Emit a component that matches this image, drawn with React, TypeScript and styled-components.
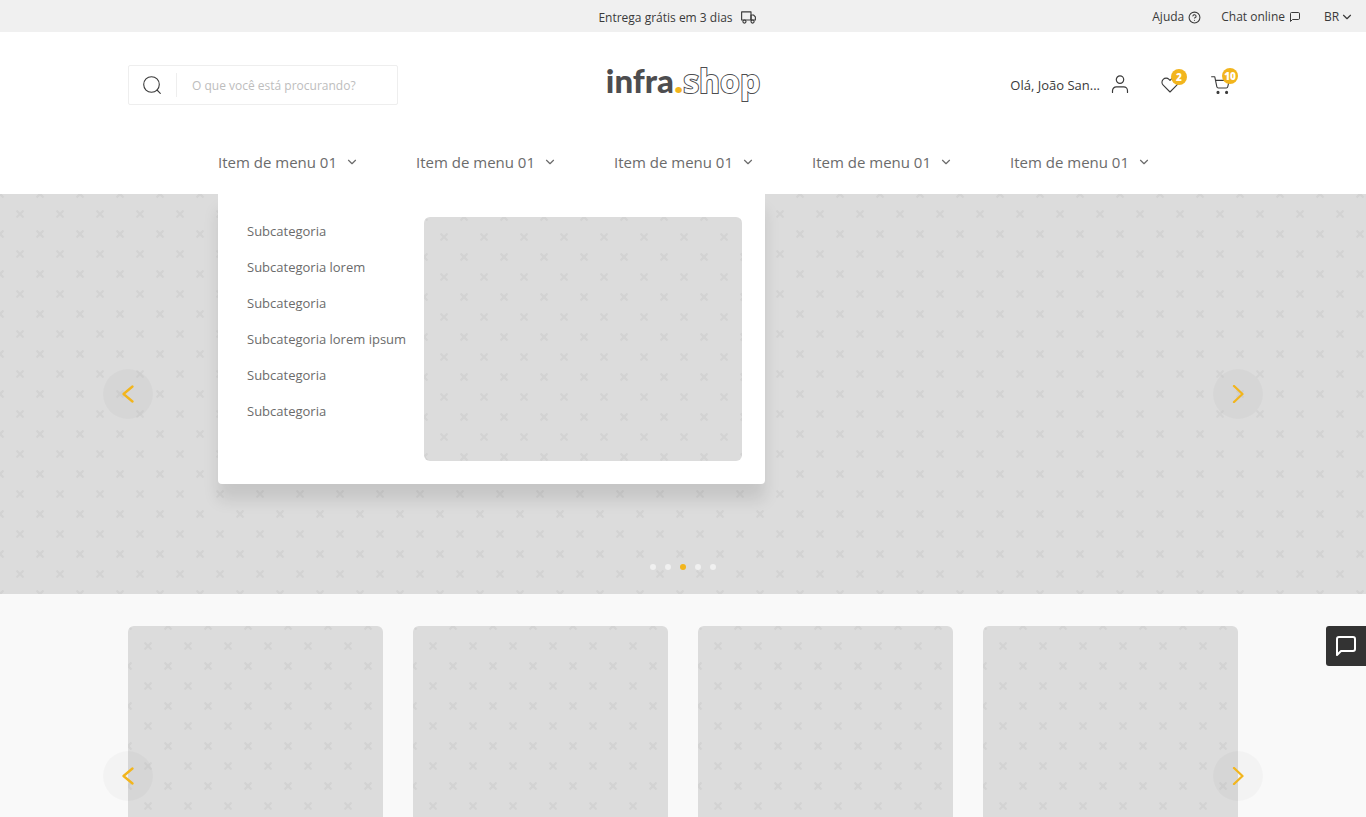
import React from "react";
import styled, { createGlobalStyle } from "styled-components";
import {
  FiTruck,
  FiHelpCircle,
  FiMessageSquare,
  FiChevronDown,
} from "react-icons/fi";

const color = {
  ink: "#3a3a3a",
  text: "#6b6b6b",
  logo: "#4d4d4f",
  muted: "#bdbdbd",
  line: "#eeeeee",
  bar: "#f0f0f0",
  page: "#f9f9f9",
  placeholder: "#dcdcdc",
  accent: "#f2b51d",
  chat: "#333333",
};

const crossTile = `url("data:image/svg+xml,${encodeURIComponent(
  '<svg xmlns="http://www.w3.org/2000/svg" width="40" height="40"><g stroke="#d3d3d3" stroke-width="2.4"><path d="M16.5 16.5l7 7m0-7l-7 7M-3.5 -3.5l7 7M3.5 -3.5l-7 7M36.5 -3.5l7 7m0-7l-7 7M-3.5 36.5l7 7m0-7l-7 7M36.5 36.5l7 7m0-7l-7 7"/></g></svg>'
)}")`;

const GlobalStyle = createGlobalStyle`
  *, *::before, *::after { box-sizing: border-box; }
  body {
    margin: 0;
    background: ${color.page};
    color: ${color.ink};
    font-family: "Open Sans", "Noto Sans", sans-serif;
    font-size: 12px;
    line-height: 16px;
  }
  button, input, select {
    font: inherit;
    color: inherit;
    background: none;
    border: 0;
    padding: 0;
    margin: 0;
  }
  button { cursor: pointer; }
  a { color: inherit; text-decoration: none; }
  ul { list-style: none; margin: 0; padding: 0; }
  svg { display: block; flex: none; }
`;

const TopBar = styled.div`
  display: grid;
  grid-template-columns: 1fr auto 1fr;
  align-items: center;
  height: 32px;
  padding: 2px 12px 0;
  background: ${color.bar};
`;

const Shipping = styled.p`
  grid-column: 2;
  display: flex;
  align-items: center;
  gap: 8px;
  margin: 0;
  padding: 1px 12px 0 0;
`;

const TopLinks = styled.nav`
  display: flex;
  justify-content: flex-end;
  align-items: center;
  gap: 20px;
`;

const TopLink = styled.a`
  display: flex;
  align-items: center;
  gap: 4px;
`;

const Language = styled.label`
  display: flex;
  align-items: center;
  padding-left: 3px;

  select {
    appearance: none;
    cursor: pointer;
  }
`;

const Container = styled.div`
  position: relative;
  width: calc(100% - 48px);
  max-width: 1110px;
  margin: 0 auto;
`;

const Header = styled.header`
  background: #ffffff;
`;

const HeaderRow = styled(Container)`
  display: grid;
  grid-template-columns: 1fr auto 1fr;
  align-items: center;
  padding-top: 33px;
`;

const Search = styled.form`
  display: flex;
  align-items: center;
  width: 270px;
  height: 40px;
  border: 1px solid ${color.line};
  border-radius: 2px;

  button {
    display: grid;
    place-items: center;
    width: 48px;
    height: 24px;
    padding-right: 2px;
    border-right: 1px solid ${color.line};
  }

  input {
    flex: 1;
    min-width: 0;
    padding: 2px 15px 0;
    outline: 0;
  }

  input::placeholder {
    color: ${color.muted};
    opacity: 1;
  }
`;

const Logo = styled.a`
  display: flex;
  align-items: baseline;
  height: 40px;
  font-size: 32px;
  line-height: 30px;
  color: ${color.logo};
`;

const LogoName = styled.span`
  font-family: Lato, sans-serif;
  font-size: 33px;
  font-weight: 900;
`;

const LogoDot = styled.span`
  font-weight: 800;
  color: ${color.accent};
`;

const LogoOutline = styled.span`
  color: #ffffff;
  font-weight: 700;
  -webkit-text-stroke: 2px ${color.logo};
  paint-order: stroke fill;
`;

const Account = styled.div`
  display: flex;
  justify-content: flex-end;
  align-items: center;
`;

const AccountLink = styled.a`
  display: flex;
  align-items: center;
  gap: 11px;
  margin-right: 32px;
  font-size: 13px;
`;

const IconLink = styled.a`
  position: relative;
  display: block;
  padding-right: 8px;

  & + & {
    margin-left: 24px;
  }
`;

const Badge = styled.span`
  position: absolute;
  top: -8px;
  right: 0;
  width: 16px;
  height: 16px;
  border-radius: 50%;
  background: ${color.accent};
  color: #ffffff;
  font-size: 10px;
  font-weight: 800;
  line-height: 16px;
  text-align: center;
`;

const MenuBar = styled.nav`
  width: 930px;
  max-width: 100%;
  margin: 0 auto;
  position: relative;
  z-index: 2;
  padding: 45px 0 20px;
`;

const MenuList = styled.ul`
  display: flex;
  justify-content: space-between;
`;

const MenuButton = styled.button`
  display: flex;
  align-items: center;
  gap: 8px;
  font-size: 15px;
  line-height: 24px;
  color: ${color.text};

  svg {
    margin-right: -3px;
    stroke-width: 2;
  }
`;

const Dropdown = styled.div`
  position: absolute;
  top: 100%;
  left: 0;
  display: flex;
  justify-content: space-between;
  width: 547px;
  padding: 23px;
  border-radius: 0 0 4px 4px;
  background: #ffffff;
  box-shadow: 0 16px 16px rgba(0, 0, 0, 0.1);
`;

const SubList = styled.ul`
  padding-left: 6px;
  color: ${color.text};
  font-size: 13px;
  line-height: 28px;

  li + li {
    margin-top: 8px;
  }
`;

const Placeholder = styled.div`
  background: ${color.placeholder} ${crossTile};
`;

const Promo = styled(Placeholder)`
  width: 318px;
  height: 244px;
  border-radius: 6px;
`;

const Hero = styled(Placeholder)`
  position: relative;
  height: 400px;
`;

const HeroInner = styled(Container)`
  height: 100%;
`;

const Arrow = styled.button<{ $side: "left" | "right" }>`
  position: absolute;
  top: 50%;
  ${(p) => p.$side}: 0;
  display: grid;
  place-items: center;
  width: 50px;
  height: 50px;
  border-radius: 50%;
  background: rgba(0, 0, 0, 0.025);
  transform: translate(${(p) => (p.$side === "left" ? "-50%" : "50%")}, -50%);
`;

const Dots = styled.div`
  position: absolute;
  right: 0;
  bottom: 24px;
  left: 0;
  display: flex;
  justify-content: center;
  align-items: center;
  gap: 9px;
`;

const Dot = styled.button<{ $active: boolean }>`
  width: 6px;
  height: 6px;
  border-radius: 50%;
  background: ${(p) => (p.$active ? color.accent : "#f0f0f0")};
`;

const Shelf = styled(Container)`
  margin-top: 32px;
`;

const CardGrid = styled.ul`
  display: grid;
  grid-template-columns: repeat(4, 1fr);
  gap: 30px;
`;

const Card = styled(Placeholder)`
  height: 300px;
  border-radius: 6px;
`;

const ChatButton = styled.button`
  position: fixed;
  top: 626px;
  right: 0;
  display: grid;
  place-items: center;
  width: 40px;
  height: 40px;
  border-radius: 3px 0 0 3px;
  background: ${color.chat};
  color: #ffffff;
`;

const stroke = {
  fill: "none",
  stroke: "currentColor",
  strokeLinecap: "round" as const,
  strokeLinejoin: "round" as const,
};

const SearchIcon = () => (
  <svg width="18" height="18" viewBox="0 0 18 18" {...stroke} strokeWidth="1.1">
    <circle cx="8.5" cy="8.5" r="7.8" />
    <path d="M14 14l3.3 3.3" />
  </svg>
);

const UserIcon = () => (
  <svg width="18" height="20" viewBox="0 0 18 20" {...stroke} strokeWidth="1.2">
    <circle cx="9" cy="4.6" r="3.7" />
    <path d="M1.5 17.5v-1.8a3.8 3.8 0 0 1 3.8-3.8h7.4a3.8 3.8 0 0 1 3.8 3.8v1.8" />
  </svg>
);

const HeartIcon = () => (
  <svg width="18" height="17" viewBox="0 0 18 17" {...stroke} strokeWidth="1.1">
    <path d="M9 15L2.2 8.2a4.1 4.1 0 0 1 0-5.9 4.1 4.1 0 0 1 5.8 0l1 1 1-1a4.1 4.1 0 0 1 5.8 0 4.1 4.1 0 0 1 0 5.9z" />
  </svg>
);

const CartIcon = () => (
  <svg width="19" height="19" viewBox="0 0 19 19" {...stroke} strokeWidth="1.1">
    <path d="M.6 .8h3.2l2 9.9a1.6 1.6 0 0 0 1.6 1.3h7.8a1.6 1.6 0 0 0 1.6-1.3l1.4-6.3H4.6" />
    <circle cx="7" cy="16.4" r="1" fill="currentColor" />
    <circle cx="15.6" cy="16.4" r="1" fill="currentColor" />
  </svg>
);

const ArrowIcon = ({ side }: { side: "left" | "right" }) => (
  <svg width="12" height="18" viewBox="0 0 12 18" {...stroke} stroke={color.accent} strokeWidth="2.3">
    <path d={side === "left" ? "M10.5 1.5L1.5 9l9 7.5" : "M2 1L10.5 9 2 17"} />
  </svg>
);

const menuItems = [1, 2, 3, 4, 5];
const subcategories = [
  "Subcategoria",
  "Subcategoria lorem",
  "Subcategoria",
  "Subcategoria lorem ipsum",
  "Subcategoria",
  "Subcategoria",
];
const cards = [1, 2, 3, 4];
const slides = [0, 1, 2, 3, 4];

export default function App() {
  const [slide, setSlide] = React.useState(2);
  const [openMenu, setOpenMenu] = React.useState(1);

  const step = (by: number) =>
    setSlide((current) => (current + by + slides.length) % slides.length);

  return (
    <>
      <GlobalStyle />
      <TopBar>
        <Shipping>
          Entrega grátis em 3 dias <FiTruck size={15} strokeWidth={1.8} />
        </Shipping>
        <TopLinks aria-label="Atendimento">
          <TopLink href="#ajuda">
            Ajuda <FiHelpCircle size={13} />
          </TopLink>
          <TopLink href="#chat">
            Chat online <FiMessageSquare size={12} />
          </TopLink>
          <Language>
            <select aria-label="Idioma" defaultValue="BR">
              <option>BR</option>
            </select>
            <FiChevronDown size={14} />
          </Language>
        </TopLinks>
      </TopBar>

      <Header>
        <HeaderRow>
          <Search role="search" onSubmit={(e) => e.preventDefault()}>
            <button type="submit" aria-label="Buscar">
              <SearchIcon />
            </button>
            <input
              type="text"
              aria-label="Buscar produtos"
              placeholder="O que você está procurando?"
            />
          </Search>
          <Logo href="#inicio">
            <LogoName>infra</LogoName>
            <LogoDot>.</LogoDot>
            <LogoOutline>shop</LogoOutline>
          </Logo>
          <Account>
            <AccountLink href="#conta">
              Olá, João San...
              <UserIcon />
            </AccountLink>
            <IconLink href="#favoritos" aria-label="Favoritos">
              <HeartIcon />
              <Badge>2</Badge>
            </IconLink>
            <IconLink href="#carrinho" aria-label="Carrinho">
              <CartIcon />
              <Badge>10</Badge>
            </IconLink>
          </Account>
        </HeaderRow>

        <MenuBar aria-label="Categorias">
          <MenuList>
            {menuItems.map((item) => (
              <li key={item}>
                <MenuButton
                  type="button"
                  aria-expanded={openMenu === item}
                  onClick={() => setOpenMenu(openMenu === item ? 0 : item)}
                >
                  Item de menu 01 <FiChevronDown size={14} />
                </MenuButton>
              </li>
            ))}
          </MenuList>
          {openMenu > 0 && (
            <Dropdown>
              <SubList>
                {subcategories.map((name, i) => (
                  <li key={i}>
                    <a href="#subcategoria">{name}</a>
                  </li>
                ))}
              </SubList>
              <Promo />
            </Dropdown>
          )}
        </MenuBar>
      </Header>

      <main>
        <Hero>
          <HeroInner>
            <Arrow $side="left" type="button" aria-label="Banner anterior" onClick={() => step(-1)}>
              <ArrowIcon side="left" />
            </Arrow>
            <Arrow $side="right" type="button" aria-label="Próximo banner" onClick={() => step(1)}>
              <ArrowIcon side="right" />
            </Arrow>
          </HeroInner>
          <Dots>
            {slides.map((n) => (
              <Dot
                key={n}
                type="button"
                $active={slide === n}
                aria-label={`Banner ${n + 1}`}
                onClick={() => setSlide(n)}
              />
            ))}
          </Dots>
        </Hero>

        <Shelf>
          <CardGrid>
            {cards.map((card) => (
              <li key={card}>
                <Card />
              </li>
            ))}
          </CardGrid>
          <Arrow $side="left" type="button" aria-label="Produtos anteriores">
            <ArrowIcon side="left" />
          </Arrow>
          <Arrow $side="right" type="button" aria-label="Próximos produtos">
            <ArrowIcon side="right" />
          </Arrow>
        </Shelf>
      </main>

      <ChatButton type="button" aria-label="Abrir chat">
        <FiMessageSquare size={24} />
      </ChatButton>
    </>
  );
}
